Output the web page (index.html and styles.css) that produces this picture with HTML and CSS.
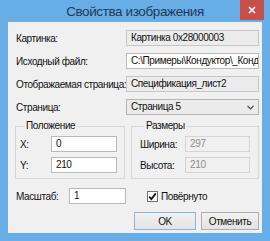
FILE: index.html
```html
<!DOCTYPE html>
<html lang="ru">
<head>
<meta charset="UTF-8" />
<meta name="viewport" content="width=device-width, initial-scale=1" />
<title>Свойства изображения</title>
<link rel="stylesheet" href="styles.css">
</head>
<body>

<div class="window">
  <div class="titlebar">
    <span></span>
    <span class="title">Свойства изображения</span>
    <button class="close-btn" aria-label="Закрыть">
      <svg width="8" height="8" viewBox="0 0 8 8"><path d="M1 1 L7 7 M7 1 L1 7" stroke="#fff" stroke-width="1.6"/></svg>
    </button>
  </div>

  <div class="content">
    <div class="row">
      <label>Картинка:</label>
      <div class="field readonly">Картинка 0x28000003</div>
    </div>
    <div class="row">
      <label>Исходный файл:</label>
      <div class="field">C:\Примеры\Кондуктор\_Конду</div>
    </div>
    <div class="row">
      <label>Отображаемая страница:</label>
      <div class="field readonly">Спецификация_лист2</div>
    </div>
    <div class="row">
      <label>Страница:</label>
      <div class="field combo">
        <span>Страница 5</span>
        <svg width="7" height="5" viewBox="0 0 7 5"><path d="M0.5 0.8 L3.5 3.8 L6.5 0.8" fill="none" stroke="#444" stroke-width="1.2"/></svg>
      </div>
    </div>

    <div class="groups">
      <fieldset class="group group-pos">
        <legend>Положение</legend>
        <div class="grow"><label>X:</label><div class="field small">0</div></div>
        <div class="grow"><label>Y:</label><div class="field small">210</div></div>
      </fieldset>
      <fieldset class="group group-size">
        <legend>Размеры</legend>
        <div class="grow"><label>Ширина:</label><div class="field small disabled">297</div></div>
        <div class="grow"><label>Высота:</label><div class="field small disabled">210</div></div>
      </fieldset>
    </div>

    <div class="bottom-row">
      <label class="scale-label">Масштаб:</label>
      <div class="field scale">1</div>
      <label class="check">
        <span class="box">
          <svg width="9" height="9" viewBox="0 0 9 9"><path d="M1.2 4.6 L3.4 7 L7.8 1.4" fill="none" stroke="#111" stroke-width="1.8"/></svg>
        </span>
        Повёрнуто
      </label>
    </div>

    <div class="buttons">
      <button class="btn default">OK</button>
      <button class="btn">Отменить</button>
    </div>
  </div>
</div>

</body>
</html>
```

FILE: styles.css
```css
:root {
  --frame: #67ade6;
  --face: #f0f0f0;
  --border: #b9b9b9;
  --text: #111;
}
body {
  margin: 0; padding: 0;
  font-family: 'Liberation Sans', Arial, sans-serif;
  font-size: 10px;
  letter-spacing: -0.4px;
  color: var(--text);
}
label { white-space: nowrap; flex-shrink: 0; }
.window {
  width: 270px;
  height: 241px;
  background: var(--frame);
  display: flex;
  flex-direction: column;
}
.titlebar {
  height: 22px;
  display: grid;
  grid-template-columns: 1fr auto 1fr;
  align-items: start;
}
.title {
  font-size: 13.5px;
  letter-spacing: -0.4px;
  line-height: 23px;
  color: #1f3b5a;
}
.close-btn {
  justify-self: end;
  margin-right: 6px;
  width: 24px;
  height: 20px;
  border: none;
  padding: 0;
  background: #c7504c;
  display: flex;
  align-items: center;
  justify-content: center;
}
.content {
  flex-grow: 1;
  margin: 0 8px 8px;
  background: var(--face);
  padding: 8px 3px 0 8px;
  display: flex;
  flex-direction: column;
}
.row {
  display: flex;
  align-items: center;
  height: 16px;
  margin-bottom: 7px;
}
.row label {
  width: 110px;
}
.field {
  box-sizing: border-box;
  height: 16px;
  border: 1px solid var(--border);
  background: #fff;
  padding: 0 4px;
  line-height: 14px;
  white-space: nowrap;
  overflow: hidden;
  flex-grow: 1;
  min-width: 0;
}
.field.readonly {
  background: #ececec;
  border-color: #c6c6c6;
}
.field.combo {
  background: #ebebeb;
  border-color: #b4b4b4;
  display: flex;
  justify-content: space-between;
  align-items: center;
  padding-right: 4px;
}
.groups {
  display: flex;
  gap: 6px;
  margin: -3px 0 0 -1px;
}
.group {
  margin: 0;
  border: 1px solid #d6d6d6;
  padding: 3px 7px 5px 4px;
  min-width: 0;
  box-sizing: border-box;
}
.group legend {
  padding: 0 2px;
  margin-left: 4px;
  line-height: 14px;
}
.group-pos { width: 111px; }
.group-size { width: 129px; padding-left: 8px; padding-right: 8px; }
.grow {
  display: flex;
  align-items: center;
  height: 16px;
  margin-top: 5px;
}
.grow:first-of-type { margin-top: 0; }
.group-pos .grow label { width: 31px; }
.group-size .grow label { width: 45px; }
.field.small { flex-grow: 0; width: 67px; }
.group-size .field.small { width: 66px; }
.field.disabled {
  background: #f0f0f0;
  border-color: #d4d4d4;
  color: #8d8d8d;
}
.bottom-row {
  display: flex;
  align-items: center;
  height: 16px;
  margin-top: 9px;
}
.scale-label { width: 53px; }
.field.scale { flex-grow: 0; width: 57px; }
.check {
  display: flex;
  align-items: center;
  gap: 3px;
  margin-left: 21px;
}
.box {
  box-sizing: border-box;
  width: 11px;
  height: 11px;
  border: 1px solid #707070;
  background: #fff;
  display: flex;
  align-items: center;
  justify-content: center;
}
.buttons {
  display: flex;
  justify-content: flex-end;
  gap: 5px;
  margin-top: 8px;
}
.btn {
  box-sizing: border-box;
  flex-shrink: 0;
  height: 18px;
  width: 58px;
  border: 1px solid #adadad;
  background: linear-gradient(#f2f2f2, #e3e3e3);
  font-family: inherit;
  font-size: 10px;
  letter-spacing: inherit;
  color: var(--text);
  padding: 0;
}
.btn.default {
  width: 62px;
  border-color: #8fb4da;
}
```
